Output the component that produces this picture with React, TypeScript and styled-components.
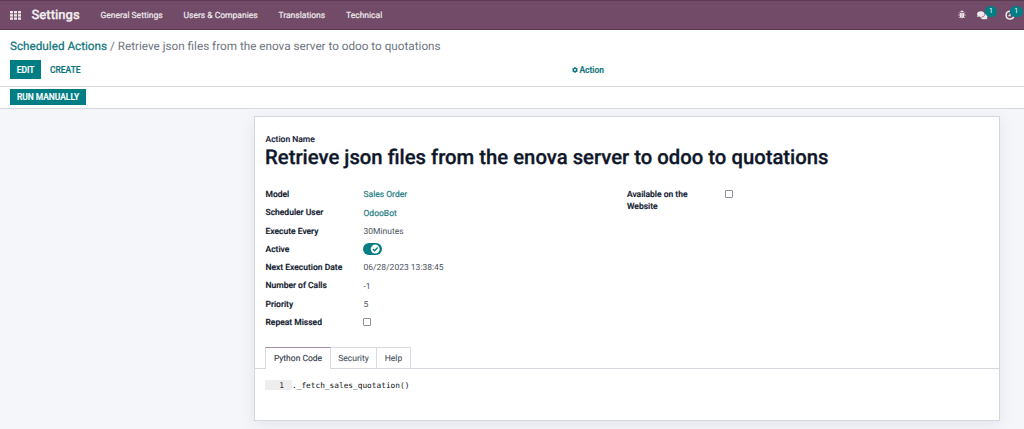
import React from "react";
import styled, { createGlobalStyle } from "styled-components";
import { FaComments, FaCog } from "react-icons/fa";

const GlobalStyle = createGlobalStyle`
  * { box-sizing: border-box; }
  html, body { margin: 0; height: 100%; overflow: hidden; background: #f5f6fa; }
  body { font-family: Roboto, "Liberation Sans", sans-serif; font-size: 8.5px; color: #4b5361; text-rendering: geometricPrecision; }
  button { font-family: inherit; border: 0; margin: 0; padding: 0; background: none; }
`;

const Navbar = styled.header`
  display: flex;
  align-items: center;
  height: 30px;
  padding: 0 0 0 10px;
  background: #714b67;
  border-top: 1px solid #5b3953;
  border-bottom: 1px solid #5b3953;
  color: #efe9ed;
`;

const AppsIcon = styled.svg`
  width: 11px;
  height: 9px;
  fill: #ece6ea;
`;

const Brand = styled.div`
  width: 69px;
  margin-left: 10.5px;
  padding-top: 1px;
  font-size: 13px;
  font-weight: 500;
  -webkit-text-stroke: 0.25px currentColor;
  color: #f3eef1;
`;

const Menu = styled.nav`
  display: flex;
  gap: 20.8px;
  padding-top: 2px;
  font-size: 8.52px;
`;

const MenuItem = styled.span`
  white-space: nowrap;
  -webkit-text-stroke: 0.2px currentColor;
`;

const Tray = styled.div`
  display: flex;
  align-items: center;
  margin-left: auto;
  height: 28px;
`;

const TrayItem = styled.div<{ $width: number }>`
  position: relative;
  width: ${(p) => p.$width}px;
  height: 10px;
  svg { display: block; }
`;

const Badge = styled.span<{ $left: number }>`
  position: absolute;
  left: ${(p) => p.$left}px;
  top: -4px;
  width: 12.5px;
  height: 11px;
  border-radius: 5.5px;
  background: #017e84;
  color: #fff;
  font-size: 7px;
  line-height: 11px;
  text-align: center;
`;

const ControlPanel = styled.section`
  height: 57px;
  padding: 7px 10px 0;
  background: #fff;
  border-bottom: 1px solid #d5d8dd;
`;

const Breadcrumb = styled.div`
  height: 18px;
  line-height: 18px;
  font-size: 11.72px;
  color: #6f7681;
  white-space: nowrap;
`;

const BreadcrumbLink = styled.span`
  color: #0b747a;
  -webkit-text-stroke: 0.2px currentColor;
`;

const Toolbar = styled.div`
  display: grid;
  grid-template-columns: 561.5px 1fr;
  align-items: center;
  margin-top: 5px;
  height: 19px;
`;

const ButtonGroup = styled.div`
  display: flex;
  align-items: center;
  gap: 9px;
`;

const PrimaryButton = styled.button<{ $width: number; $height: number }>`
  width: ${(p) => p.$width}px;
  height: ${(p) => p.$height}px;
  background: #017e84;
  color: #fff;
  font-size: 8.45px;
  font-weight: 500;
  -webkit-text-stroke: 0.2px currentColor;
  white-space: nowrap;
`;

const LinkButton = styled.button`
  display: flex;
  align-items: center;
  gap: 2px;
  color: #0b747a;
  font-size: 8.45px;
  font-weight: 500;
  -webkit-text-stroke: 0.2px currentColor;
`;

const StatusBar = styled.section`
  display: flex;
  align-items: center;
  height: 22px;
  padding: 0 10px 1px;
  background: #fff;
  border-bottom: 1px solid #d5d8dd;
`;

const Content = styled.main`
  height: 320px;
  padding: 7px 24px 0 254px;
`;

const Sheet = styled.article`
  height: 305px;
  padding-top: 17px;
  background: #fff;
  border: 1px solid #d3d6dc;
  box-shadow: 0 4px 14px rgba(60, 60, 90, 0.09);
`;

const TitleLabel = styled.div`
  margin-left: 10.5px;
  height: 11px;
  line-height: 12px;
  font-weight: 500;
  -webkit-text-stroke: 0.15px currentColor;
  color: #1b2337;
`;

const Title = styled.h1`
  margin: 0 0 0 10px;
  height: 26px;
  line-height: 25px;
  font-size: 20.3px;
  font-weight: 500;
  -webkit-text-stroke: 0.3px currentColor;
  color: #0f172a;
  white-space: nowrap;
`;

const Groups = styled.div`
  display: grid;
  grid-template-columns: 361.5px 1fr;
  margin: 15px 0 0 10.5px;
  height: 161px;
`;

const Field = styled.div`
  display: grid;
  grid-template-columns: 98px 1fr;
  height: 18.3px;
`;

const Label = styled.label`
  line-height: 12.3px;
  padding-top: 3px;
  font-weight: 500;
  -webkit-text-stroke: 0.2px currentColor;
  color: #111a2e;
`;

const Value = styled.div<{ $link?: boolean }>`
  padding-top: 3.3px;
  line-height: 12.3px;
  color: ${(p) => (p.$link ? "#15797d" : "#4b5361")};
  -webkit-text-stroke: ${(p) => (p.$link ? 0.15 : 0)}px currentColor;
`;

const Checkbox = styled.span`
  display: block;
  width: 8px;
  height: 8px;
  margin: 1px 0 0 -0.5px;
  border: 1px solid #8e8e99;
  border-radius: 1px;
  background: #fff;
`;

const Toggle = styled.svg`
  display: block;
  width: 19px;
  height: 12px;
  margin: -0.8px 0 0 -0.5px;
`;

const Tabs = styled.div`
  display: flex;
  height: 22px;
  padding-left: 10px;
  border-bottom: 1px solid #d5d8dd;
`;

const Tab = styled.div<{ $width: number; $active?: boolean }>`
  width: ${(p) => p.$width}px;
  height: ${(p) => (p.$active ? 22 : 21)}px;
  line-height: 22px;
  text-align: center;
  border-top: 1px solid ${(p) => (p.$active ? "#a68da0" : "#d9dbe0")};
  border-right: 1px solid #d9dbe0;
  border-left: ${(p) => (p.$active ? "1px solid #d9dbe0" : "0")};
  background: #fff;
  color: ${(p) => (p.$active ? "#303848" : "#4b5361")};
  -webkit-text-stroke: 0.1px currentColor;
`;

const CodeLine = styled.div`
  display: flex;
  margin: 11px 0 0 10px;
  height: 10px;
  line-height: 11px;
  font-family: "DejaVu Sans Mono", monospace;
  font-size: 7.8px;
  color: #111;
`;

const Gutter = styled.span`
  width: 27px;
  padding-right: 8px;
  text-align: right;
  background: #eeeeee;
  color: #333;
`;

function BugIcon() {
  return (
    <svg width="8" height="9" viewBox="0 0 8 9" fill="#efe9ed" stroke="#efe9ed">
      <path d="M2.3 2.3a1.7 1.7 0 0 1 3.4 0zM1.9 2.9h1.9v5.4C2.6 8.2 1.9 7.5 1.9 6zM4.2 2.9h1.9V6c0 1.5-.7 2.2-1.9 2.3z" stroke="none" />
      <path d="M.9 2.2l1.3 1.3M7.1 2.2L5.8 3.5M.1 5h2M7.9 5h-2M.9 8l1.4-1.5M7.1 8L5.7 6.5" strokeWidth=".7" />
    </svg>
  );
}

function ActivityIcon() {
  return (
    <svg width="10" height="10" viewBox="0 0 10 10" fill="none" stroke="#efe9ed">
      <path d="M5 1.2A3.9 3.9 0 1 0 8.9 5.6" strokeWidth="1.5" />
      <path d="M5.1 3.2V5.6H3.4" strokeWidth="1.1" />
    </svg>
  );
}

function ActiveToggle() {
  return (
    <Toggle viewBox="0 0 19 12">
      <rect width="19" height="12" rx="6" fill="#017e84" />
      <circle cx="12.2" cy="6.1" r="4.5" fill="#fff" />
      <path d="M9.9 6.1l1.7 1.7 3-3.2" fill="none" stroke="#017e84" strokeWidth="1.4" />
    </Toggle>
  );
}

const fields: { label: string; value: React.ReactNode; link?: boolean }[] = [
  { label: "Model", value: "Sales Order", link: true },
  { label: "Scheduler User", value: "OdooBot", link: true },
  { label: "Execute Every", value: "30Minutes" },
  { label: "Active", value: <ActiveToggle /> },
  { label: "Next Execution Date", value: "06/28/2023 13:38:45" },
  { label: "Number of Calls", value: "-1" },
  { label: "Priority", value: "5" },
  { label: "Repeat Missed", value: <Checkbox /> },
];

export default function App() {
  return (
    <>
      <GlobalStyle />
      <Navbar>
        <AppsIcon viewBox="0 0 11 9">
          {[0, 4, 8].map((x) =>
            [0, 3.2, 6.4].map((y) => <rect key={`${x}-${y}`} x={x} y={y} width="3" height="2.4" />)
          )}
        </AppsIcon>
        <Brand>Settings</Brand>
        <Menu>
          <MenuItem>General Settings</MenuItem>
          <MenuItem>Users &amp; Companies</MenuItem>
          <MenuItem>Translations</MenuItem>
          <MenuItem>Technical</MenuItem>
        </Menu>
        <Tray>
          <TrayItem $width={19.5}><BugIcon /></TrayItem>
          <TrayItem $width={28}><FaComments size={10.5} /><Badge $left={7.8}>1</Badge></TrayItem>
          <TrayItem $width={19}><ActivityIcon /><Badge $left={5}>1</Badge></TrayItem>
        </Tray>
      </Navbar>
      <ControlPanel>
        <Breadcrumb>
          <BreadcrumbLink>Scheduled Actions</BreadcrumbLink> / Retrieve json files from the enova server to odoo to quotations
        </Breadcrumb>
        <Toolbar>
          <ButtonGroup>
            <PrimaryButton $width={31} $height={19}>EDIT</PrimaryButton>
            <LinkButton>CREATE</LinkButton>
          </ButtonGroup>
          <LinkButton><FaCog size={6} />Action</LinkButton>
        </Toolbar>
      </ControlPanel>
      <StatusBar>
        <PrimaryButton $width={76} $height={16}>RUN MANUALLY</PrimaryButton>
      </StatusBar>
      <Content>
        <Sheet>
          <TitleLabel>Action Name</TitleLabel>
          <Title>Retrieve json files from the enova server to odoo to quotations</Title>
          <Groups>
            <div>
              {fields.map((f) => (
                <Field key={f.label}>
                  <Label>{f.label}</Label>
                  <Value $link={f.link}>{f.value}</Value>
                </Field>
              ))}
            </div>
            <Field>
              <Label>Available on the<br />Website</Label>
              <Value><Checkbox /></Value>
            </Field>
          </Groups>
          <Tabs>
            <Tab $width={66} $active>Python Code</Tab>
            <Tab $width={46}>Security</Tab>
            <Tab $width={34}>Help</Tab>
          </Tabs>
          <CodeLine>
            <Gutter>1</Gutter>
            <span>._fetch_sales_quotation()</span>
          </CodeLine>
        </Sheet>
      </Content>
    </>
  );
}
